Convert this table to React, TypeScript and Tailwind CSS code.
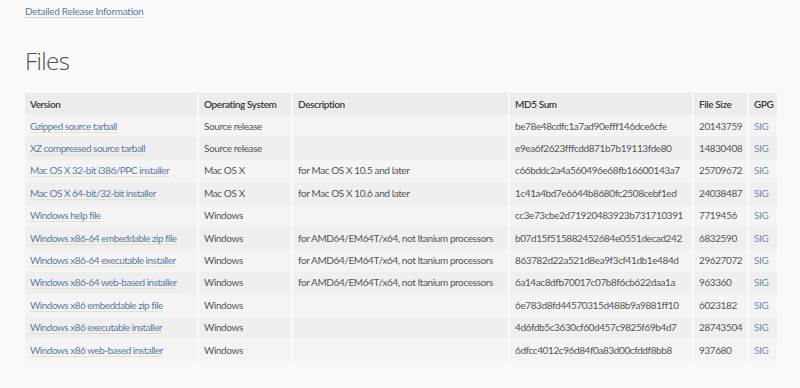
import React from 'react';

type Row = {
  version: string;
  os: string;
  desc: string;
  md5: string;
  size: string;
};

const rows: Row[] = [
  { version: 'Gzipped source tarball', os: 'Source release', desc: '', md5: 'be78e48cdfc1a7ad90efff146dce6cfe', size: '20143759' },
  { version: 'XZ compressed source tarball', os: 'Source release', desc: '', md5: 'e9ea6f2623fffcdd871b7b19113fde80', size: '14830408' },
  { version: 'Mac OS X 32-bit i386/PPC installer', os: 'Mac OS X', desc: 'for Mac OS X 10.5 and later', md5: 'c66bddc2a4a560496e68fb16600143a7', size: '25709672' },
  { version: 'Mac OS X 64-bit/32-bit installer', os: 'Mac OS X', desc: 'for Mac OS X 10.6 and later', md5: '1c41a4bd7e6644b8680fc2508cebf1ed', size: '24038487' },
  { version: 'Windows help file', os: 'Windows', desc: '', md5: 'cc3e73cbe2d71920483923b731710391', size: '7719456' },
  { version: 'Windows x86-64 embeddable zip file', os: 'Windows', desc: 'for AMD64/EM64T/x64, not Itanium processors', md5: 'b07d15f515882452684e0551decad242', size: '6832590' },
  { version: 'Windows x86-64 executable installer', os: 'Windows', desc: 'for AMD64/EM64T/x64, not Itanium processors', md5: '863782d22a521d8ea9f3cf41db1e484d', size: '29627072' },
  { version: 'Windows x86-64 web-based installer', os: 'Windows', desc: 'for AMD64/EM64T/x64, not Itanium processors', md5: '6a14ac8dfb70017c07b8f6cb622daa1a', size: '963360' },
  { version: 'Windows x86 embeddable zip file', os: 'Windows', desc: '', md5: '6e783d8fd44570315d488b9a9881ff10', size: '6023182' },
  { version: 'Windows x86 executable installer', os: 'Windows', desc: '', md5: '4d6fdb5c3630cf60d457c9825f69b4d7', size: '28743504' },
  { version: 'Windows x86 web-based installer', os: 'Windows', desc: '', md5: '6dfcc4012c96d84f0a83d00cfddf8bb8', size: '937680' },
];

const cell = 'px-[5px] border-r-2 border-[#fafafa] whitespace-nowrap overflow-hidden align-middle';

export default function App() {
  return (
    <div className="w-[800px] h-[388px] overflow-hidden bg-[#f9f9f9] text-[#555] font-['Lato',sans-serif]">
      <div className="pl-[25px]">
        <div className="pt-[4px] text-[10px] leading-[15px] tracking-[-0.3px]">
          <a href="#" className="text-[#5a7da5] border-b border-[#dcd8c4]">
            Detailed Release Information
          </a>
        </div>
        <h2 className="mt-[27px] text-[24px] leading-[30px] tracking-[-0.6px] text-[#4d4d4d] font-['Open_Sans',sans-serif] font-light">
          Files
        </h2>
        <table className="mt-[17px] w-[753px] border-collapse text-[10px] tracking-[-0.4px] table-fixed">
          <colgroup>
            <col className="w-[173px]" />
            <col className="w-[94px]" />
            <col className="w-[217px]" />
            <col className="w-[184px]" />
            <col className="w-[55px]" />
            <col className="w-[30px]" />
          </colgroup>
          <thead>
            <tr className="h-[22px] bg-[#ececec] text-[#383838] text-left">
              <th className={cell + ' font-semibold'}>Version</th>
              <th className={cell + ' font-semibold'}>Operating System</th>
              <th className={cell + ' font-semibold'}>Description</th>
              <th className={cell + ' font-semibold'}>MD5 Sum</th>
              <th className={cell + ' font-semibold'}>File Size</th>
              <th className={cell + ' font-semibold border-r-0'}>GPG</th>
            </tr>
          </thead>
          <tbody>
            {rows.map((r, i) => (
              <tr key={r.version} className={i % 2 === 0 ? 'h-[22.4px] bg-[#f4f4f4]' : 'h-[22.4px] bg-[#efefef]'}>
                <td className={cell}>
                  <a href="#" className="text-[#5a7ca3] tracking-[-0.5px] border-b border-[#e6e1ca]">{r.version}</a>
                </td>
                <td className={cell}>{r.os}</td>
                <td className={cell}>{r.desc}</td>
                <td className={cell}>{r.md5}</td>
                <td className={cell}>{r.size}</td>
                <td className={cell + ' border-r-0'}>
                  <a href="#" className="text-[#6d8caf]">SIG</a>
                </td>
              </tr>
            ))}
          </tbody>
        </table>
      </div>
    </div>
  );
}
